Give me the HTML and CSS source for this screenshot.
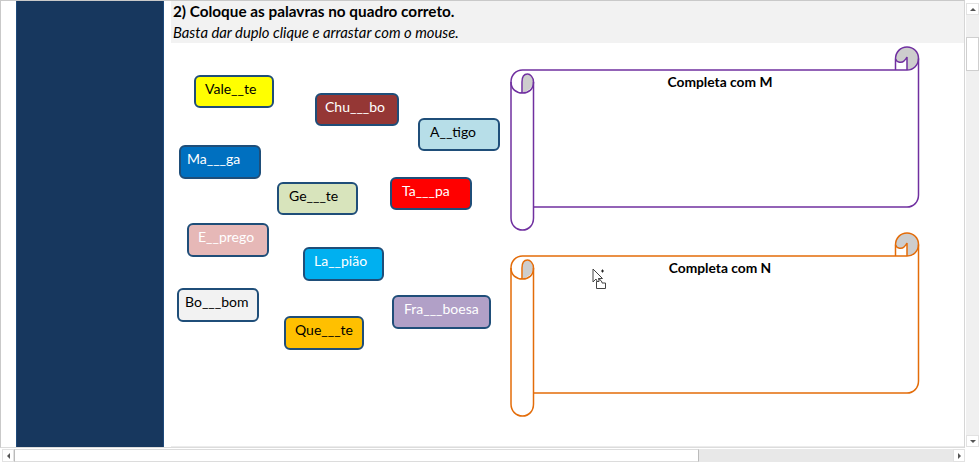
FILE: index.html
```html
<!DOCTYPE html>
<html>
<head>
    <title>Atividade</title>
    <link rel="stylesheet" href="styles.css">
</head>
<body>
    <div class="window">
        <div class="main">
            <div class="doc">
                <div class="gutter"></div>
                <div class="sidebar"></div>
                <div class="sheet">
                    <div class="heading">
                        <h1>2) Coloque as palavras no quadro correto.</h1>
                        <p>Basta dar duplo clique e arrastar com o mouse.</p>
                    </div>
                    <div class="canvas">
                        <div class="tile t-vale">Vale__te</div>
                        <div class="tile t-chu">Chu___bo</div>
                        <div class="tile t-antigo">A__tigo</div>
                        <div class="tile t-manga">Ma___ga</div>
                        <div class="tile t-gente">Ge___te</div>
                        <div class="tile t-tampa">Ta___pa</div>
                        <div class="tile t-emprego">E__prego</div>
                        <div class="tile t-lampiao">La__pião</div>
                        <div class="tile t-bombom">Bo___bom</div>
                        <div class="tile t-quente">Que___te</div>
                        <div class="tile t-framboesa">Fra___boesa</div>

                        <!-- Quadro M -->
                        <div class="scroll scroll-m">
                            <svg width="410" height="186" viewBox="0 0 410 186">
                                <path class="curl" d="M385.500 13C387 17 392 17 394 15C395 14 396 13 397 11V24C404 24 408.500 19 408.500 12.500C408.500 6 403.500 1 397 1C390.500 1 385.500 6 385.500 13Z"/>
                                <path class="curl" d="M12.500 46.500V36C12.500 31 14 28.500 17.500 28.500C20 28.500 23 31 23 36C23 41 19 45 12.500 46.500Z"/>
                                <path class="line" d="M385.500 24V13C385.500 6 390.500 1 397 1C403.500 1 408.500 6 408.500 12.500C408.500 19 403.500 24 397 24H12.500C6 24 1 29 1 36V172C1 179 6 184 12.500 184C19 184 23.500 179 23.500 172V36"/>
                                <path class="line" d="M1 36C1 43 6 47 12.500 47C19 47 23.500 43 23.500 36C23.500 31 20 28 17.500 28C14 28 12 31 12 36V47"/>
                                <path class="line" d="M385.500 13C387 17 392 17 394 15C395 14 396 13 397 11V24"/>
                                <path class="line" d="M408.500 12.500V149C408.500 156 403.500 161 397 161H23.500"/>
                            </svg>
                            <div class="scroll-title">Completa com M</div>
                        </div>

                        <!-- Quadro N -->
                        <div class="scroll scroll-n">
                            <svg width="410" height="186" viewBox="0 0 410 186">
                                <path class="curl" d="M385.500 13C387 17 392 17 394 15C395 14 396 13 397 11V24C404 24 408.500 19 408.500 12.500C408.500 6 403.500 1 397 1C390.500 1 385.500 6 385.500 13Z"/>
                                <path class="curl" d="M12.500 46.500V36C12.500 31 14 28.500 17.500 28.500C20 28.500 23 31 23 36C23 41 19 45 12.500 46.500Z"/>
                                <path class="line" d="M385.500 24V13C385.500 6 390.500 1 397 1C403.500 1 408.500 6 408.500 12.500C408.500 19 403.500 24 397 24H12.500C6 24 1 29 1 36V172C1 179 6 184 12.500 184C19 184 23.500 179 23.500 172V36"/>
                                <path class="line" d="M1 36C1 43 6 47 12.500 47C19 47 23.500 43 23.500 36C23.500 31 20 28 17.500 28C14 28 12 31 12 36V47"/>
                                <path class="line" d="M385.500 13C387 17 392 17 394 15C395 14 396 13 397 11V24"/>
                                <path class="line" d="M408.500 12.500V149C408.500 156 403.500 161 397 161H23.500"/>
                            </svg>
                            <div class="scroll-title">Completa com N</div>
                        </div>

                        <svg class="cursor" width="16" height="22" viewBox="0 0 16 22">
                            <path class="cursor-arrow" d="M1 1V14L4 11L7 17L9 16L6.500 10.500H10.500Z"/>
                            <path class="cursor-box" d="M4.500 13.500H7V10.500L10 14V15H13.500V20.500H4.500Z"/>
                            <path class="cursor-star" d="M9 3H12M10.500 1.500V4.500"/>
                        </svg>
                    </div>
                </div>
            </div>
            <div class="vbar">
                <div class="vbutton"><span class="arrow-up"></span></div>
                <div class="vtrack-top"></div>
                <div class="vthumb"></div>
                <div class="vtrack"></div>
                <div class="vbutton"><span class="arrow-down"></span></div>
            </div>
        </div>
        <div class="hbar">
            <div class="hbutton"><span class="arrow-left"></span></div>
            <div class="hthumb"></div>
            <div class="htrack"></div>
            <div class="hbutton"><span class="arrow-right"></span></div>
        </div>
    </div>
</body>
</html>
```

FILE: styles.css
```css
* {
    box-sizing: border-box;
}
html, body {
    margin: 0;
    height: 100%;
    overflow: hidden;
}
body {
    background: #fff;
    font-family: Lato, "Open Sans", sans-serif;
    color: #000;
}
.window {
    display: flex;
    flex-direction: column;
    width: 980px;
    height: 465px;
}
.main {
    display: flex;
    height: 448px;
}
.doc {
    display: flex;
    width: 965px;
    border: 1px solid #c9c9c9;
    border-bottom-color: #dcdcdc;
    border-right-color: #d6d6d6;
}
.gutter {
    width: 15px;
}
.sidebar {
    width: 148px;
    background: #17375e;
    border-left: 1px solid #1f4a7a;
    border-right: 1px solid #1f4a7a;
}
.sheet {
    flex: 1;
    margin-left: 7px;
    display: flex;
    flex-direction: column;
    border-bottom: 1px solid #ececec;
}
.heading {
    height: 42px;
    background: #f2f2f2;
    padding-left: 2px;
}
.heading h1 {
    margin: 0;
    font-size: 15.300px;
    line-height: 20px;
    font-weight: 700;
}
.heading p {
    margin: 0;
    padding-top: 2px;
    font-size: 14.800px;
    line-height: 18px;
    font-style: italic;
}
.canvas {
    position: relative;
    flex: 1;
}
.tile {
    position: absolute;
    width: 81px;
    height: 33px;
    padding: 3px 0 0 9px;
    border: 2px solid #1f4e79;
    border-radius: 6px;
    font-size: 14px;
    line-height: 18px;
    white-space: nowrap;
}
.t-vale { left: 23px; top: 32px; width: 80px; background: #ffff00; }
.t-chu { left: 144px; top: 50px; width: 84px; padding-left: 8px; background: #953735; color: #fff; }
.t-antigo { left: 247px; top: 75px; width: 82px; padding-left: 10px; background: #b7dee8; }
.t-manga { left: 8px; top: 102px; width: 82px; height: 34px; padding-left: 6px; background: #0070c0; color: #fff; }
.t-gente { left: 106px; top: 139px; padding-left: 10px; background: #d8e4bc; }
.t-tampa { left: 219px; top: 134px; width: 82px; padding-left: 10px; background: #ff0000; color: #fff; }
.t-emprego { left: 16px; top: 180px; width: 82px; height: 34px; background: #e6b8b7; color: #fff; }
.t-lampiao { left: 132px; top: 204px; height: 34px; background: #00b0f0; color: #fff; }
.t-bombom { left: 6px; top: 245px; width: 82px; height: 34px; padding-left: 6px; background: #f2f2f2; }
.t-quente { left: 113px; top: 273px; width: 80px; height: 34px; background: #ffc000; }
.t-framboesa { left: 221px; top: 252px; width: 99px; height: 34px; padding-left: 10px; background: #b1a0c7; color: #fff; }
.scroll {
    position: absolute;
    left: 339px;
    width: 410px;
    height: 186px;
}
.scroll-m {
    top: 3px;
    --line: #7030a0;
}
.scroll-n {
    top: 189px;
    --line: #e36c09;
}
.scroll svg {
    display: block;
}
.line {
    fill: none;
    stroke: var(--line);
    stroke-width: 1.500;
}
.curl {
    fill: #cdcdcd;
}
.scroll-title {
    position: absolute;
    left: 10px;
    right: 0;
    top: 27px;
    text-align: center;
    font-size: 13.800px;
    line-height: 18px;
    font-weight: 700;
}
.cursor {
    position: absolute;
    left: 421px;
    top: 225px;
}
.cursor-arrow, .cursor-box {
    fill: #fff;
    stroke: #444;
    stroke-width: 1;
}
.cursor-star {
    fill: none;
    stroke: #222;
    stroke-width: 1;
}
.vbar {
    width: 15px;
    display: flex;
    flex-direction: column;
    padding: 3px 1px 1px 1px;
}
.vbutton {
    flex: none;
    height: 12px;
    display: flex;
    align-items: center;
    justify-content: center;
    background: #fff;
    border: 1px solid #e2e2e2;
}
.vtrack-top {
    height: 22px;
    background: #f0f0f0;
}
.vthumb {
    flex: none;
    height: 34px;
    background: #fff;
    border: 1px solid #cfcfcf;
}
.vtrack {
    flex: 1;
    background: #f0f0f0;
}
.arrow-up {
    border-bottom: 3px solid #555;
    border-left: 3px solid transparent;
    border-right: 3px solid transparent;
}
.arrow-down {
    border-top: 3px solid #555;
    border-left: 3px solid transparent;
    border-right: 3px solid transparent;
}
.hbar {
    display: flex;
    width: 963px;
    height: 13px;
    margin: 1px 0 0 2px;
    background: #e8e8e8;
}
.hbutton {
    width: 12px;
    display: flex;
    align-items: center;
    justify-content: center;
    background: #fff;
    border: 1px solid #e2e2e2;
}
.hthumb {
    width: 685px;
    background: #fff;
    border: 1px solid #dcdcdc;
    border-left-color: #bbb;
    border-right-color: #bbb;
}
.htrack {
    flex: 1;
}
.arrow-left {
    border-right: 3px solid #555;
    border-top: 3px solid transparent;
    border-bottom: 3px solid transparent;
}
.arrow-right {
    border-left: 3px solid #555;
    border-top: 3px solid transparent;
    border-bottom: 3px solid transparent;
}
```
